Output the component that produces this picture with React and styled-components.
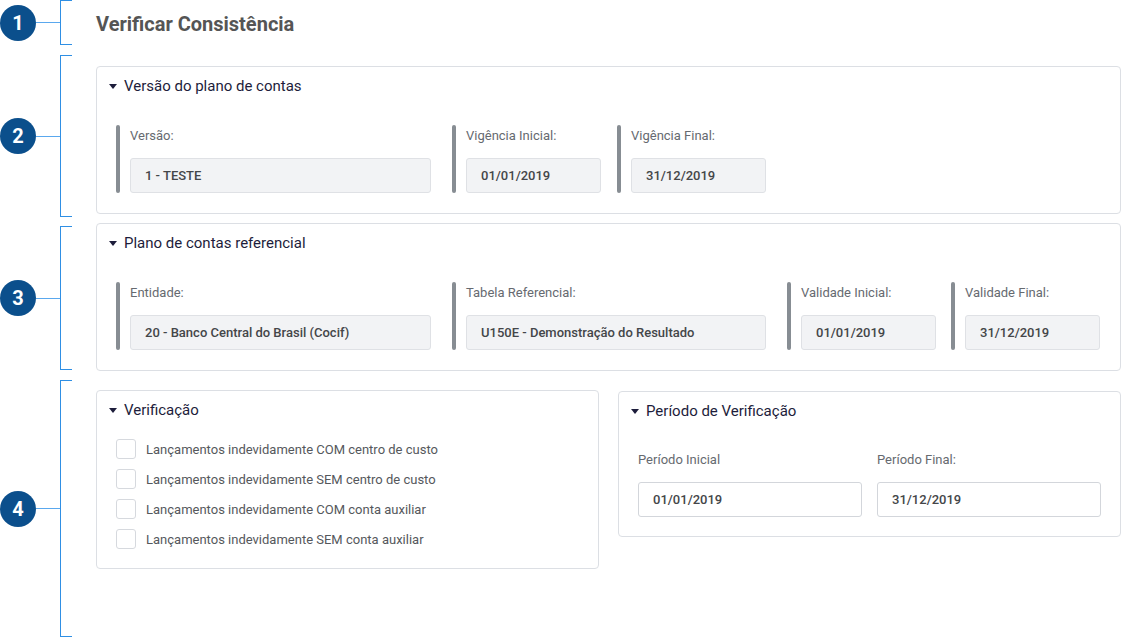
import styled, { createGlobalStyle } from "styled-components";

const GlobalStyle = createGlobalStyle`
  * { box-sizing: border-box; }
  body {
    margin: 0;
    background: #fff;
    font-family: Roboto, "Liberation Sans", sans-serif;
  }
`;

const versionFields = [
  { label: "Versão:", value: "1 - TESTE", w: 315, ml: 0 },
  { label: "Vigência Inicial:", value: "01/01/2019", w: 149, ml: 21 },
  { label: "Vigência Final:", value: "31/12/2019", w: 149, ml: 16 },
];

const referenceFields = [
  { label: "Entidade:", value: "20 - Banco Central do Brasil (Cocif)", w: 315, ml: 0 },
  { label: "Tabela Referencial:", value: "U150E - Demonstração do Resultado", w: 314, ml: 21 },
  { label: "Validade Inicial:", value: "01/01/2019", w: 149, ml: 21 },
  { label: "Validade Final:", value: "31/12/2019", w: 149, ml: 15 },
];

const checks = [
  "Lançamentos indevidamente COM centro de custo",
  "Lançamentos indevidamente SEM centro de custo",
  "Lançamentos indevidamente COM conta auxiliar",
  "Lançamentos indevidamente SEM conta auxiliar",
];

function Annotation({ n, top, bottom }) {
  return (
    <AnnotationCell $top={top} $bottom={bottom}>
      <Badge>{n}</Badge>
      <Connector />
      <Bracket />
    </AnnotationCell>
  );
}

function CardHeader({ title }) {
  return (
    <Header>
      <svg width="8" height="5" viewBox="0 0 8 5">
        <polygon points="0,0 8,0 4,5" fill="#1d1d3b" />
      </svg>
      <span>{title}</span>
    </Header>
  );
}

function ReadonlyField({ label, value, w, ml }) {
  return (
    <Field $w={w} $ml={ml}>
      <Bar />
      <FieldBody>
        <Label>{label}</Label>
        <Input $readonly>{value}</Input>
      </FieldBody>
    </Field>
  );
}

export default function App() {
  return (
    <>
      <GlobalStyle />
      <Page>
        <Section>
          <Annotation n={1} top={0} bottom={5} />
          <TitleArea>
            <Title>Verificar Consistência</Title>
          </TitleArea>
        </Section>

        <Section>
          <Annotation n={2} top={5} bottom={1} />
          <Content $top={16} $bottom={4}>
            <Card>
              <CardHeader title="Versão do plano de contas" />
              <CardBody>
                <FieldRow>
                  {versionFields.map((f) => (
                    <ReadonlyField key={f.label} {...f} />
                  ))}
                </FieldRow>
              </CardBody>
            </Card>
          </Content>
        </Section>

        <Section>
          <Annotation n={3} top={8} bottom={5} />
          <Content $top={5} $bottom={4}>
            <Card>
              <CardHeader title="Plano de contas referencial" />
              <CardBody>
                <FieldRow>
                  {referenceFields.map((f) => (
                    <ReadonlyField key={f.label} {...f} />
                  ))}
                </FieldRow>
              </CardBody>
            </Card>
          </Content>
        </Section>

        <Section $minH={262}>
          <Annotation n={4} top={5} bottom={0} />
          <Content $top={15} $bottom={0}>
            <TwoCols>
              <Card>
                <CardHeader title="Verificação" />
                <CheckList>
                  {checks.map((c) => (
                    <CheckRow key={c}>
                      <CheckBox />
                      <CheckLabel>{c}</CheckLabel>
                    </CheckRow>
                  ))}
                </CheckList>
              </Card>
              <Card $offset={1}>
                <CardHeader title="Período de Verificação" />
                <PeriodBody>
                  <div>
                    <Label>Período Inicial</Label>
                    <Input>01/01/2019</Input>
                  </div>
                  <div>
                    <Label>Período Final:</Label>
                    <Input>31/12/2019</Input>
                  </div>
                </PeriodBody>
              </Card>
            </TwoCols>
          </Content>
        </Section>
      </Page>
    </>
  );
}

const Page = styled.div`
  width: 1122px;
  display: flex;
  flex-direction: column;
`;

const Section = styled.section`
  display: grid;
  grid-template-columns: 96px 1025px;
  min-height: ${(p) => (p.$minH ? `${p.$minH}px` : "0")};
`;

const AnnotationCell = styled.div`
  display: flex;
  align-items: center;
  padding-top: ${(p) => p.$top}px;
  padding-bottom: ${(p) => p.$bottom}px;
`;

const Badge = styled.div`
  flex: 0 0 36px;
  height: 36px;
  border-radius: 50%;
  background: #0b4f8c;
  color: #fff;
  font-size: 20px;
  font-weight: 700;
  display: flex;
  align-items: center;
  justify-content: center;
`;

const Connector = styled.div`
  flex: 0 0 24px;
  height: 1px;
  background: #5aa8ee;
`;

const Bracket = styled.div`
  align-self: stretch;
  width: 12px;
  border: 1px solid #2f8fe4;
  border-right: none;
`;

const TitleArea = styled.div`
  padding: 12px 0 14px;
`;

const Title = styled.h1`
  margin: 0;
  font-size: 20px;
  line-height: 24px;
  font-weight: 700;
  color: #555555;
`;

const Content = styled.div`
  padding-top: ${(p) => p.$top}px;
  padding-bottom: ${(p) => p.$bottom}px;
`;

const Card = styled.div`
  border: 1px solid #dcdfe4;
  border-radius: 4px;
  background: #fff;
  margin-top: ${(p) => p.$offset || 0}px;
`;

const Header = styled.div`
  height: 38px;
  padding: 0 12px;
  display: flex;
  align-items: center;
  gap: 7px;
  font-size: 15px;
  color: #1d1d3b;
`;

const CardBody = styled.div`
  padding: 20px 19px 20px;
`;

const FieldRow = styled.div`
  display: flex;
`;

const Field = styled.div`
  display: flex;
  gap: 10px;
  width: ${(p) => p.$w}px;
  margin-left: ${(p) => p.$ml}px;
`;

const Bar = styled.div`
  flex: 0 0 4px;
  border-radius: 2px;
  background: #878d93;
`;

const FieldBody = styled.div`
  flex: 1;
  display: flex;
  flex-direction: column;
`;

const Label = styled.div`
  height: 22px;
  line-height: 22px;
  margin-bottom: 11px;
  font-size: 13px;
  color: #666a70;
`;

const Input = styled.div`
  height: 35px;
  display: flex;
  align-items: center;
  padding: 0 14px;
  border: 1px solid ${(p) => (p.$readonly ? "#dfe1e5" : "#d3d6db")};
  border-radius: 3px;
  background: ${(p) => (p.$readonly ? "#f2f3f5" : "#fff")};
  font-size: 13px;
  font-weight: 500;
  color: #444649;
`;

const TwoCols = styled.div`
  display: grid;
  grid-template-columns: 1fr 1fr;
  column-gap: 19px;
  align-items: start;
`;

const CheckList = styled.div`
  padding: 10px 19px 19px;
  display: flex;
  flex-direction: column;
  gap: 10px;
`;

const CheckRow = styled.label`
  display: flex;
  align-items: center;
  gap: 10px;
`;

const CheckBox = styled.span`
  width: 20px;
  height: 20px;
  border: 1px solid #d6d9de;
  border-radius: 3px;
  background: #fff;
`;

const CheckLabel = styled.span`
  font-size: 13px;
  color: #55585c;
`;

const PeriodBody = styled.div`
  display: grid;
  grid-template-columns: 1fr 1fr;
  column-gap: 15px;
  padding: 19px 19px 19px;
`;
